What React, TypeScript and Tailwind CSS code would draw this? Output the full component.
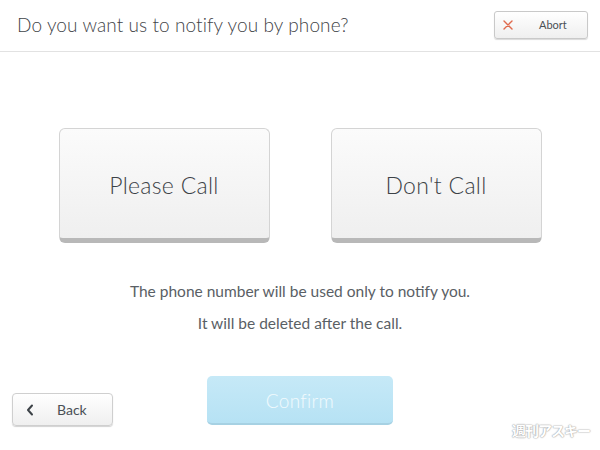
import React from "react";

const font = { fontFamily: "Lato, 'Noto Sans', sans-serif" };

export default function App() {
  return (
    <div className="w-[600px] h-[450px] bg-white relative overflow-hidden text-[#4a5055]" style={font}>
      <div className="h-[52px] border-b border-[#e2e2e2] flex items-center justify-between pl-[17px] pr-[12px]">
        <div className="text-[19px] font-light tracking-[0.1px] text-[#3f4448] mt-[-1px]">Do you want us to notify you by phone?</div>
        <button className="w-[94px] h-[28px] mb-[1px] rounded-[3px] border border-[#c9c9c9] bg-gradient-to-b from-white to-[#efefef] shadow-[0_1px_1px_rgba(0,0,0,0.15)] flex items-center pl-[7px]">
          <svg width="10" height="10" viewBox="0 0 10 10" className="ml-[1px]">
            <path d="M1 1L9 9M9 1L1 9" stroke="#e06a4d" strokeWidth="1.4" strokeLinecap="round" />
          </svg>
          <span className="text-[11px] text-[#4a5055] ml-[26px]">Abort</span>
        </button>
      </div>

      <div className="flex justify-center gap-[61px] mt-[76px]">
        <button className="w-[211px] h-[115px] rounded-[6px] border border-[#d4d4d4] border-b-[5px] border-b-[#b8b8b8] bg-gradient-to-b from-[#fbfbfb] to-[#efefef] flex items-center justify-center pt-[3px]">
          <span className="text-[23px] text-[#3c4247] font-light tracking-[0.3px]">Please Call</span>
        </button>
        <button className="w-[211px] h-[115px] rounded-[6px] border border-[#d4d4d4] border-b-[5px] border-b-[#b8b8b8] bg-gradient-to-b from-[#fbfbfb] to-[#efefef] flex items-center justify-center pt-[3px]">
          <span className="text-[23px] text-[#3c4247] font-light tracking-[0.3px]">Don't Call</span>
        </button>
      </div>

      <div className="mt-[38px] flex flex-col items-center text-[15.5px] text-[#5a6065] leading-[20px] gap-[12px]">
        <div>The phone number will be used only to notify you.</div>
        <div>It will be deleted after the call.</div>
      </div>

      <div className="absolute left-0 right-0 top-[376px] flex items-end">
        <button className="ml-[12px] mb-[-1px] w-[101px] h-[33px] rounded-[4px] border border-[#cfcfcf] bg-gradient-to-b from-white to-[#efefef] shadow-[0_1px_1px_rgba(0,0,0,0.18)] flex items-center pl-[13px]">
          <svg width="8" height="12" viewBox="0 0 8 12">
            <path d="M6 1.5L2 6L6 10.5" stroke="#3c4247" strokeWidth="2" fill="none" strokeLinecap="round" strokeLinejoin="round" />
          </svg>
          <span className="text-[14px] text-[#4a5055] ml-[23px]">Back</span>
        </button>
        <button className="ml-[94px] w-[186px] h-[49px] rounded-[5px] bg-gradient-to-b from-[#c6e9f7] to-[#b6e2f4] border-b-[2px] border-b-[#a6d1e3] flex items-center justify-center pt-[3px]">
          <span className="text-[19px] text-white/80 font-light tracking-[0.3px]">Confirm</span>
        </button>
      </div>

      <div
        className="absolute right-[10px] bottom-[9px] text-[14px] font-bold text-white tracking-[-1px]"
        style={{ fontFamily: "'Noto Sans CJK JP', sans-serif", textShadow: "0 0 1px #aaa, 0 0 1px #aaa, 0 0 2px #bbb" }}
      >
        週刊アスキー
      </div>
    </div>
  );
}
